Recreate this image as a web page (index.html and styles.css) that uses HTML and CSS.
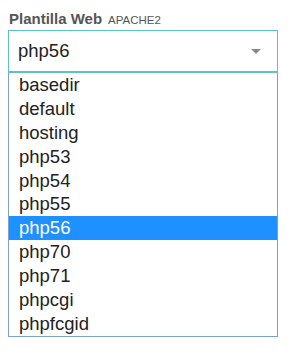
FILE: index.html
```html
<!DOCTYPE html>
<html lang="es">
<head>
    <meta charset="UTF-8">
    <title>Plantilla Web</title>
    <link rel="stylesheet" href="styles.css">
</head>
<body>
    <div class="field">
        <div class="field-label">
            <span class="label-main">Plantilla Web</span>
            <span class="label-sub">APACHE2</span>
        </div>
        <div class="select-box">
            <span class="select-value">php56</span>
            <span class="select-arrow"></span>
        </div>
        <ul class="options">
            <li>basedir</li>
            <li>default</li>
            <li>hosting</li>
            <li>php53</li>
            <li>php54</li>
            <li>php55</li>
            <li class="active">php56</li>
            <li>php70</li>
            <li>php71</li>
            <li>phpcgi</li>
            <li>phpfcgid</li>
        </ul>
    </div>
</body>
</html>
```

FILE: styles.css
```css
body {
    margin: 0;
    padding: 8px;
    background-color: #ffffff;
    font-family: "Liberation Sans", Arial, sans-serif;
    color: #222;
}

.field {
    width: 270px;
}

.field-label {
    display: flex;
    align-items: baseline;
    gap: 6px;
    height: 22px;
    padding-left: 1px;
    line-height: 22px;
}

.label-main {
    font-size: 15px;
    font-weight: bold;
    color: #555;
}

.label-sub {
    font-size: 11.5px;
    color: #555;
}

.select-box {
    display: flex;
    align-items: center;
    justify-content: space-between;
    height: 40px;
    padding: 0 16px 0 9px;
    border: 1px solid #5bc4c0;
    border-bottom-width: 2px;
}

.select-value {
    font-size: 18.5px;
    color: #222;
}

.select-arrow {
    width: 0;
    height: 0;
    border-left: 5px solid transparent;
    border-right: 5px solid transparent;
    border-top: 5px solid #888;
}

.options {
    list-style: none;
    margin: 0;
    padding: 0;
    border: 1px solid #7f9ed8;
    border-top: none;
}

.options li {
    height: 23.9px;
    line-height: 23.9px;
    padding-left: 10px;
    font-size: 18.5px;
    color: #222;
}

.options li.active {
    background-color: #1e90ff;
    color: #fff;
}
```
